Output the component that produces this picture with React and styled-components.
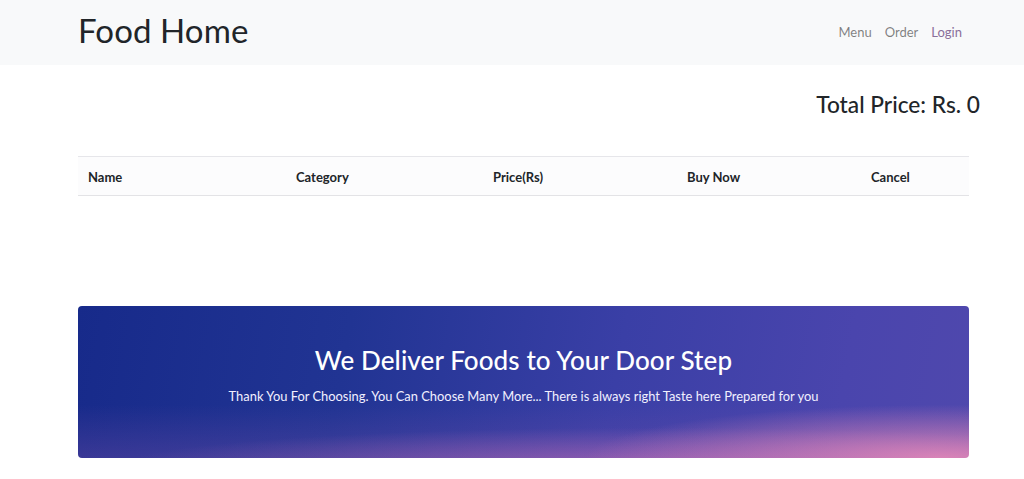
import React from "react";
import styled, { createGlobalStyle } from "styled-components";

const Global = createGlobalStyle`
  html, body { margin: 0; padding: 0; background: #fff; }
  body { font-family: Lato, "Noto Sans", sans-serif; color: #212529; }
  * { box-sizing: border-box; }
`;

const NavBar = styled.nav`
  height: 65px;
  background: #f8f9fa;
  display: flex;
  align-items: center;
  justify-content: space-between;
  padding: 0 62px 0 79px;
`;

const Brand = styled.a`
  font-size: 33px;
  font-weight: 400;
  color: #212529;
  text-decoration: none;
  letter-spacing: 0.1px;
  margin-top: -5px;
  margin-left: -1px;
`;

const NavLinks = styled.div`
  display: flex;
  gap: 13px;
  margin-top: -2px;
`;

const NavLink = styled.a`
  font-size: 13px;
  color: ${(p) => (p.$visited ? "#8a6f9a" : "rgba(0,0,0,0.5)")};
  text-decoration: none;
`;

const Main = styled.main`
  padding: 0 55px 0 78px;
`;

const TotalRow = styled.div`
  display: flex;
  justify-content: flex-end;
  margin-right: -11px;
  padding-top: 25px;
  height: 91px;
`;

const TotalText = styled.h4`
  margin: 0;
  font-size: 22.7px;
  font-weight: 500;
  line-height: 30px;
  color: #212529;
`;

const Table = styled.div`
  border-top: 1px solid #e6e6ea;
  border-bottom: 1px solid #e3e3e6;
  background: #fcfcfd;
  display: grid;
  grid-template-columns: 208px 197px 194px 184px 1fr;
  height: 40px;
  align-items: center;
`;

const HeadCell = styled.div`
  padding-left: 10px;
  font-size: 13px;
  font-weight: 700;
  color: #212529;
  margin-top: 1px;
`;

const Banner = styled.section`
  margin-top: 110px;
  height: 152px;
  border-radius: 4px;
  overflow: hidden;
  display: flex;
  flex-direction: column;
  align-items: center;
  justify-content: center;
  color: #fff;
  background:
    radial-gradient(ellipse 40% 35% at 97% 100%, rgba(235,140,185,0.85), rgba(235,140,185,0) 100%),
    radial-gradient(ellipse 60% 25% at 65% 105%, rgba(205,115,185,0.55), rgba(205,115,185,0) 100%),
    linear-gradient(to bottom, rgba(0,0,0,0) 65%, rgba(120,80,170,0.35) 100%),
    linear-gradient(100deg, #172a8a 0%, #213493 30%, #3a3fa6 60%, #4a45ad 85%, #4f48ad 100%);
`;

const BannerTitle = styled.h2`
  margin: 0;
  font-size: 26px;
  font-weight: 500;
  letter-spacing: 0.1px;
  margin-top: -16px;
`;

const BannerText = styled.p`
  margin: 12px 0 0 0;
  font-size: 12.9px;
  color: #f2f0ff;
`;

export default function App() {
  return (
    <>
      <Global />
      <NavBar>
        <Brand href="#">Food Home</Brand>
        <NavLinks>
          <NavLink href="#">Menu</NavLink>
          <NavLink href="#">Order</NavLink>
          <NavLink href="#" $visited>Login</NavLink>
        </NavLinks>
      </NavBar>
      <Main>
        <TotalRow>
          <TotalText>Total Price: Rs. 0</TotalText>
        </TotalRow>
        <Table>
          <HeadCell>Name</HeadCell>
          <HeadCell>Category</HeadCell>
          <HeadCell>Price(Rs)</HeadCell>
          <HeadCell>Buy Now</HeadCell>
          <HeadCell>Cancel</HeadCell>
        </Table>
        <Banner>
          <BannerTitle>We Deliver Foods to Your Door Step</BannerTitle>
          <BannerText>
            Thank You For Choosing. You Can Choose Many More... There is always right Taste here Prepared for you
          </BannerText>
        </Banner>
      </Main>
    </>
  );
}
